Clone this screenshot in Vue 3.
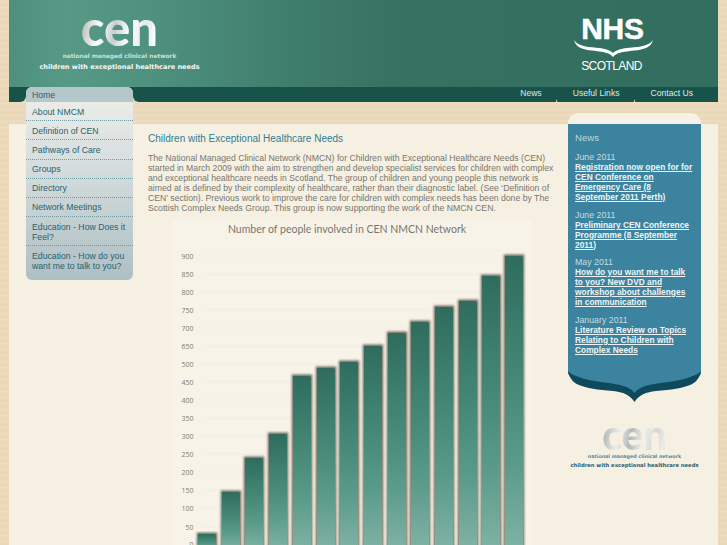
<template>
  <div class="page">
    <header class="banner">
      <div class="cen-logo">
        <div class="cen-mark">cen</div>
        <div class="cen-sub">national managed clinical network</div>
        <div class="cen-main">children with exceptional healthcare needs</div>
      </div>
      <div class="nhs-logo">
        <div class="nhs-mark">NHS</div>
        <svg class="nhs-swoosh" viewBox="574 40 79 17" width="79" height="17">
          <path d="M574 40C578 47 590 47 600 48C607 49 611 51 613 53C615 51 619 49 626 48C636 47 649 47 653 40C651 49 640 50 630 51C622 52 616 53 613 57C610 53 604 52 596 51C586 50 576 49 574 40Z" fill="#fff" />
        </svg>
        <div class="nhs-place">SCOTLAND</div>
      </div>
    </header>

    <nav class="topnav">
      <div class="stub"></div>
      <div class="slot"></div>
      <div class="links">
        <a v-for="link in topLinks" :key="link" class="toplink">{{ link }}</a>
      </div>
    </nav>

    <div class="band"></div>

    <div class="content">
      <ul class="menu">
        <li v-for="(item, idx) in menu" :key="item" class="menu-item" :class="{ active: idx === 0 }">{{ item }}</li>
      </ul>

      <main class="main">
        <h1 class="title">Children with Exceptional Healthcare Needs</h1>
        <p class="intro">The National Managed Clinical Network (NMCN) for Children with Exceptional Healthcare Needs (CEN) started in March 2009 with the aim to strengthen and develop specialist services for children with complex and exceptional healthcare needs in Scotland. The group of children and young people this network is aimed at is defined by their complexity of healthcare, rather than their diagnostic label. (See ‘Definition of CEN’ section). Previous work to improve the care for children with complex needs has been done by The Scottish Complex Needs Group. This group is now supporting the work of the NMCN CEN.</p>

        <svg class="chart" viewBox="172 220 360 325" width="360" height="325">
          <defs>
            <linearGradient id="bar" x1="0" y1="0" x2="0" y2="1">
              <stop offset="0" stop-color="#2f6c5d" />
              <stop offset="0.45" stop-color="#478a78" />
              <stop offset="0.7" stop-color="#5a9a88" />
              <stop offset="1" stop-color="#80b3a5" />
            </linearGradient>
            <filter id="soft" x="-40%" y="-5%" width="180%" height="110%">
              <feGaussianBlur stdDeviation="0.9" />
            </filter>
          </defs>
          <rect x="172" y="220" width="360" height="325" fill="#f8f3e8" />
          <text class="chart-title" x="347" y="233" text-anchor="middle">Number of people involved in CEN NMCN Network</text>
          <g v-for="tick in ticks" :key="tick.label">
            <line x1="202" x2="523" :y1="tick.y" :y2="tick.y" stroke="#efeee6" stroke-width="1" />
            <text class="tick" x="193.5" :y="tick.y + 2.5" text-anchor="end">{{ tick.label }}</text>
          </g>
          <g v-for="bar in bars" :key="bar.x">
            <rect :x="bar.x - 1.2" :y="bar.top - 1.5" :width="bar.w + 2.4" :height="552 - bar.top" fill="#5b5349" opacity="0.85" filter="url(#soft)" />
            <path :d="`M${bar.x} 550V${bar.top}H${bar.x + bar.w - 3}Q${bar.x + bar.w} ${bar.top} ${bar.x + bar.w} ${bar.top + 3}V550Z`" fill="url(#bar)" />
          </g>
        </svg>
      </main>

      <aside class="side">
        <div class="news-cap"></div>
        <section class="news">
          <h2 class="news-title">News</h2>
          <div v-for="entry in news" :key="entry.text" class="news-entry">
            <div class="news-date">{{ entry.date }}</div>
            <a class="news-link">{{ entry.text }}</a>
          </div>
        </section>
        <svg class="news-foot" viewBox="0 0 133 32" width="133" height="32">
          <path d="M0 0V3C3 10 6 13 11 15C18 18 30 20 45 21C55 22 62 25 66.5 32C71 25 78 22 88 21C103 20 115 18 122 15C127 13 130 10 133 3V0Z" fill="#0f4a5c" />
          <path d="M0 0V1.5C4 5 14 9 27 11C38 13 56 14 62 19C64 20 65.500 21.500 66.500 23C67.500 21.500 69 20 71 19C77 14 95 13 106 11C119 9 129 5 133 1.500V0Z" fill="#3b839e" />
        </svg>
        <div class="foot-logo">
          <div class="foot-mark">cen</div>
          <div class="foot-sub">national managed clinical network</div>
          <div class="foot-main">children with exceptional healthcare needs</div>
        </div>
      </aside>
    </div>
  </div>
</template>

<script setup>
const topLinks = ['News', 'Useful Links', 'Contact Us']

const menu = [
  'Home',
  'About NMCM',
  'Definition of CEN',
  'Pathways of Care',
  'Groups',
  'Directory',
  'Network Meetings',
  'Education - How Does it Feel?',
  'Education - How do you want me to talk to you?'
]

const tickLabels = ['900', '850', '800', '750', '700', '650', '500', '450', '400', '350', '300', '250', '200', '150', '100', '50', '0']
const tickYs = [256, 274, 292, 310, 328, 346, 364, 382, 400, 418, 436, 454, 472, 490, 508, 527, 544]
const ticks = tickLabels.map((label, i) => ({ label, y: tickYs[i] }))

const barXs = [198, 222, 245, 269, 293, 317, 340, 364, 388, 411, 435, 459, 482, 505]
const barTops = [534, 492, 458, 434, 376, 368, 362, 346, 333, 322, 307, 301, 276, 256]
const bars = barXs.map((x, i) => ({ x, w: 18, top: barTops[i] }))

const news = [
  { date: 'June 2011', text: 'Registration now open for for CEN Conference on Emergency Care (8 September 2011 Perth)' },
  { date: 'June 2011', text: 'Preliminary CEN Conference Programme (8 September 2011)' },
  { date: 'May 2011', text: 'How do you want me to talk to you? New DVD and workshop about challenges in communication' },
  { date: 'January 2011', text: 'Literature Review on Topics Relating to Children with Complex Needs' }
]
</script>

<style>
html, body {
  height: 545px;
  overflow: hidden;
  background: repeating-linear-gradient(180deg, #ecdcbd 0 3px, #e9d8b7 3px 6px);
}
</style>

<style scoped>
.page {
  width: 709px;
  height: 545px;
  margin-left: 9px;
  overflow: hidden;
  font-family: "Liberation Sans", Arial, sans-serif;
}

.banner {
  height: 87px;
  display: flex;
  background: linear-gradient(90deg, #4d907d 0, #569a86 8%, #4e917e 20%, #417f6d 38%, #35725f 55%, #326e5f 100%);
}

.cen-logo {
  width: 161px;
  margin-left: 30px;
  padding-top: 7px;
  text-align: center;
  color: #f4f7f5;
  font-family: "DejaVu Sans", sans-serif;
  font-weight: 700;
  white-space: nowrap;
}

.cen-mark {
  height: 44px;
  font-family: Lato, sans-serif;
  font-size: 49px;
  line-height: 40px;
  font-weight: 900;
  background: linear-gradient(100deg, #a9b0ae 25%, #ffffff 38%, #c9cfcd 47%, #ffffff 56%, #e4e8e6 66%, #ffffff 72%, #b9c1be 76%);
  -webkit-background-clip: text;
  background-clip: text;
  color: transparent;
}

.cen-sub {
  margin-top: 1px;
  font-size: 5.85px;
  line-height: 8px;
  color: #cfe0d9;
}

.cen-main {
  margin-top: 3px;
  font-size: 6.57px;
  line-height: 9px;
}

.nhs-logo {
  margin-left: 374px;
  width: 79px;
  padding-top: 15px;
  text-align: center;
  color: #fff;
}

.nhs-mark {
  height: 26px;
  font-size: 30px;
  line-height: 28px;
  font-weight: 700;
  letter-spacing: -0.2px;
  -webkit-text-stroke: 0.5px #fff;
  padding-right: 2px;
}

.nhs-swoosh {
  display: block;
  margin-top: -1px;
}

.nhs-place {
  margin-top: 3px;
  padding-right: 4px;
  font-size: 12px;
  line-height: 13px;
  letter-spacing: -0.6px;
}

.topnav {
  height: 15px;
  display: flex;
}

.stub {
  width: 17px;
  background: #17534a;
  border-bottom-right-radius: 6px;
}

.slot {
  width: 107px;
  background: linear-gradient(180deg, #17534a 0 7px, transparent 7px);
}

.links {
  flex: 1;
  display: flex;
  justify-content: flex-end;
  background: #17534a;
  border-bottom-left-radius: 6px;
  padding-right: 25px;
}

.toplink {
  position: relative;
  margin-left: 31px;
  font-size: 8.6px;
  line-height: 13px;
  color: #dfe9e5;
}

.toplink + .toplink::before {
  content: "";
  position: absolute;
  left: -19px;
  bottom: -2px;
  width: 6px;
  height: 5px;
  background: #ecdcbd;
  clip-path: polygon(50% 0, 60% 55%, 100% 100%, 0 100%, 40% 55%);
}

.band {
  height: 22px;
}

.content {
  height: 421px;
  display: flex;
  align-items: flex-start;
  background: #f6f0e2;
}

.menu {
  position: relative;
  width: 107px;
  margin: -37px 0 0 17px;
  padding: 0;
  list-style: none;
  border-radius: 6px;
  background: linear-gradient(180deg, #f0efe9 0, #d9e0e0 35%, #aebfc4 100%);
  color: #2a6270;
  font-size: 8.7px;
  line-height: 10px;
  overflow: hidden;
  flex: none;
}

.menu-item {
  padding: 4.5px 6px 3.7px;
  border-bottom: 1px dotted #6f9ba5;
}

.menu-item.active {
  height: 15px;
  box-sizing: border-box;
  padding-top: 3px;
  border-bottom: 0;
  background: #b4c7ca;
}

.menu-item:last-child {
  border-bottom: 0;
  padding-bottom: 9px;
}

.main {
  width: 407px;
  margin-left: 15px;
  flex: none;
}

.title {
  margin: 8px 0 0;
  font-size: 10px;
  line-height: 13px;
  font-weight: 400;
  color: #2f7d92;
}

.intro {
  margin: 8px 0 0;
  font-size: 8.68px;
  line-height: 10px;
  color: #77776f;
}

.chart {
  display: block;
  margin: 7px 0 0 24px;
}

.chart-title {
  font-family: Lato, sans-serif;
  font-size: 10.5px;
  fill: #77776f;
}

.tick {
  font-family: "Open Sans", sans-serif;
  font-size: 7px;
  fill: #7c7c74;
}

.side {
  width: 133px;
  margin: -11px 0 0 13px;
  flex: none;
}

.news-cap {
  height: 11px;
  border-radius: 10px 10px 0 0;
  background: #f6f1e6;
}

.news {
  height: 246px;
  box-sizing: border-box;
  padding: 8px 7px 0;
  background: #3b839e;
  font-size: 8.4px;
  line-height: 10px;
}

.news-title {
  margin: 0 0 8px;
  font-size: 9.6px;
  line-height: 12px;
  font-weight: 400;
  color: #bcd6dc;
}

.news-entry {
  margin-bottom: 7.5px;
}

.news-date {
  font-size: 8.8px;
  color: #c6dbe0;
}

.news-link {
  display: block;
  font-weight: 700;
  text-decoration: underline;
  color: #eef4f5;
}

.news-foot {
  display: block;
}

.foot-logo {
  margin-top: 22px;
  text-align: center;
  font-family: "DejaVu Sans", sans-serif;
  font-weight: 700;
  white-space: nowrap;
}

.foot-mark {
  height: 28px;
  font-family: Lato, sans-serif;
  font-size: 41px;
  line-height: 22px;
  font-weight: 900;
  background: linear-gradient(100deg, #a9adac 25%, #eceeed 38%, #b4b8b7 47%, #eceeed 56%, #d4d7d6 66%, #eceeed 72%, #a3a8a7 76%);
  -webkit-background-clip: text;
  background-clip: text;
  color: transparent;
}

.foot-sub {
  margin-top: 1px;
  font-size: 4.8px;
  line-height: 8px;
  color: #4d8f9f;
}

.foot-main {
  font-size: 5.25px;
  line-height: 9px;
  color: #1f5a70;
}
</style>
